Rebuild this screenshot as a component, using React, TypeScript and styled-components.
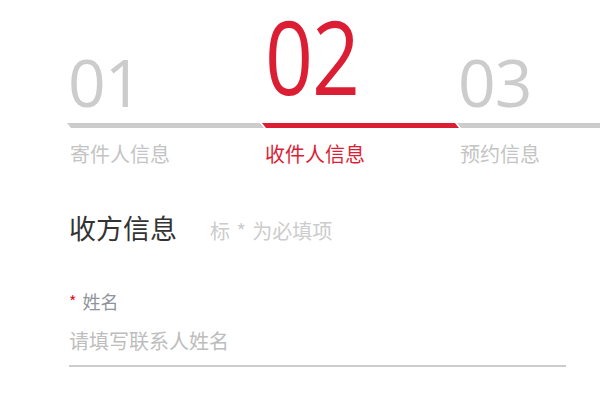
import styled, { createGlobalStyle } from "styled-components";

const GlobalStyle = createGlobalStyle`
  html, body {
    margin: 0;
    padding: 0;
    background: #ffffff;
    font-family: "Open Sans", "Noto Sans CJK SC", sans-serif;
  }
`;

const Page = styled.div`
  width: 600px;
  height: 400px;
  overflow: hidden;
  padding-left: 67px;
  box-sizing: border-box;
`;

const Steps = styled.div`
  display: grid;
  grid-template-columns: repeat(3, 195px);
`;

const Step = styled.div`
  display: flex;
  flex-direction: column;
`;

const NumWrap = styled.div<{ $active?: boolean }>`
  height: 123px;
  box-sizing: border-box;
  display: flex;
  align-items: flex-end;
  padding-left: ${(p) => (p.$active ? "3px" : "1px")};
  padding-bottom: ${(p) => (p.$active ? "19px" : "9px")};
`;

const Num = styled.div<{ $active?: boolean }>`
  font-family: "Open Sans", sans-serif;
  font-size: ${(p) => (p.$active ? "84px" : "66px")};
  line-height: 1.25;
  margin-bottom: ${(p) => (p.$active ? "-11px" : "-8px")};
  color: ${(p) => (p.$active ? "#dc1e35" : "#cccccc")};
  transform: ${(p) => (p.$active ? "scaleY(1.23)" : "none")};
  transform-origin: 0 80%;
  letter-spacing: -1px;
`;

const Bar = styled.div<{ $active?: boolean }>`
  width: 197px;
  height: 5px;
  background: ${(p) => (p.$active ? "#dc1e35" : "#cccccc")};
  clip-path: polygon(0 0, 193px 0, 197px 100%, 4px 100%);
`;

const StepLabel = styled.div<{ $active?: boolean }>`
  margin-top: 16px;
  padding-left: 3px;
  font-family: "Noto Sans CJK SC", sans-serif;
  font-size: 20px;
  line-height: 20px;
  color: ${(p) => (p.$active ? "#dc1e35" : "#c4c4c4")};
`;

const Section = styled.div`
  padding-left: 2px;
  width: 497px;
`;

const TitleRow = styled.div`
  display: flex;
  align-items: center;
  margin-top: 49px;
`;

const Title = styled.div`
  font-family: "Noto Sans CJK SC", sans-serif;
  font-size: 27px;
  line-height: 30px;
  color: #333333;
`;

const Hint = styled.div`
  margin-left: 33px;
  margin-top: 5px;
  font-family: "Noto Sans CJK SC", sans-serif;
  font-size: 20px;
  line-height: 20px;
  color: #cccccc;
  word-spacing: 2px;
`;

const FieldLabel = styled.div`
  margin-top: 48px;
  display: flex;
  align-items: center;
  font-family: "Noto Sans CJK SC", sans-serif;
  font-size: 18px;
  line-height: 20px;
  color: #8f949c;
`;

const Star = styled.span`
  color: #e0151e;
  font-size: 16px;
  margin-right: 6px;
`;

const Input = styled.div`
  margin-top: 18px;
  height: 38px;
  box-sizing: border-box;
  border-bottom: 2px solid #cccccc;
  font-family: "Noto Sans CJK SC", sans-serif;
  font-size: 20px;
  line-height: 24px;
  color: #bdbdbd;
`;

const steps = [
  { num: "01", label: "寄件人信息" },
  { num: "02", label: "收件人信息", active: true },
  { num: "03", label: "预约信息" },
];

export default function App() {
  return (
    <Page>
      <GlobalStyle />
      <Steps>
        {steps.map((s) => (
          <Step key={s.num}>
            <NumWrap $active={s.active}>
              <Num $active={s.active}>{s.num}</Num>
            </NumWrap>
            <Bar $active={s.active} />
            <StepLabel $active={s.active}>{s.label}</StepLabel>
          </Step>
        ))}
      </Steps>
      <Section>
        <TitleRow>
          <Title>收方信息</Title>
          <Hint>标 * 为必填项</Hint>
        </TitleRow>
        <FieldLabel>
          <Star>*</Star>
          姓名
        </FieldLabel>
        <Input>请填写联系人姓名</Input>
      </Section>
    </Page>
  );
}
